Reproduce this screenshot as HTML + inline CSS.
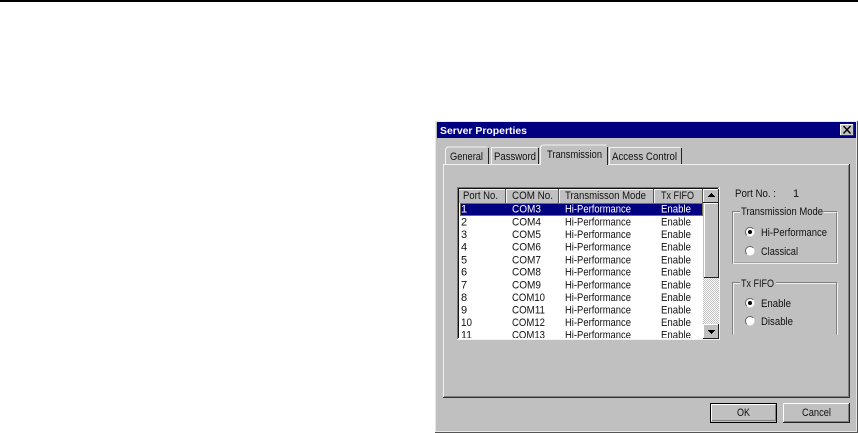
<!DOCTYPE html>
<html><head><meta charset="utf-8"><title>Server Properties</title>
<style>
html,body{margin:0;padding:0;background:#fff;width:858px;height:433px;overflow:hidden}
svg{display:block}
text{font-family:"Liberation Sans",Arial,sans-serif;font-size:11px;fill:#111}
.b{font-weight:bold;fill:#fff;font-size:10.5px}
</style></head><body>
<svg width="858" height="433" viewBox="0 0 858 433" xmlns="http://www.w3.org/2000/svg">
<defs>
<pattern id="d" width="2" height="2" patternUnits="userSpaceOnUse"><rect width="2" height="2" fill="#fff"/><rect width="1" height="1" fill="#c0c0c0"/><rect x="1" y="1" width="1" height="1" fill="#c0c0c0"/></pattern>
<clipPath id="c"><rect x="459" y="188" width="245" height="150"/></clipPath>
</defs>
<rect x="0" y="0" width="858" height="2" fill="#000"/>
<g shape-rendering="crispEdges">
<!-- window -->
<rect x="435" y="121" width="423" height="312" fill="#555"/>
<rect x="435" y="121" width="422" height="311" fill="#e8e8e8"/>
<rect x="436" y="122" width="420" height="309" fill="#c0c0c0"/>
<rect x="437" y="122" width="419" height="16" fill="#000080"/>
<!-- close -->
<rect x="840" y="124" width="14" height="12" fill="#c0c0c0"/>
<path d="M840 124.500h14M840.500 124v12" stroke="#fff" fill="none"/>
<path d="M840 135.500h14M853.500 124v12" stroke="#333" fill="none"/>
<!-- page -->
<rect x="443" y="164" width="406" height="233" fill="#c0c0c0"/>
<rect x="443" y="164" width="406" height="1" fill="#f2f2f2"/>
<rect x="443" y="164" width="1" height="233" fill="#f2f2f2"/>
<rect x="849" y="164" width="1" height="234" fill="#333"/>
<rect x="848" y="165" width="1" height="232" fill="#808080"/>
<rect x="443" y="397" width="407" height="1" fill="#333"/>
<rect x="444" y="396" width="405" height="1" fill="#808080"/>
<!-- tabs -->
<path d="M445.500 164v-15l2-2h40" fill="none" stroke="#f2f2f2"/>
<path d="M488.500 148v16" stroke="#222" fill="none"/>
<path d="M491.500 164v-16.500h46" fill="none" stroke="#f2f2f2"/>
<path d="M538.500 148v16" stroke="#222" fill="none"/>
<rect x="540" y="146" width="68" height="19" fill="#c0c0c0"/>
<path d="M540.500 165v-18l2-2h64" fill="none" stroke="#f2f2f2"/>
<path d="M607.500 147v18" stroke="#222" fill="none"/>
<path d="M609.500 164v-16.500h71" fill="none" stroke="#f2f2f2"/>
<path d="M681.500 148v16" stroke="#222" fill="none"/>
<!-- list -->
<rect x="457" y="187" width="263" height="153" fill="#fff"/>
<path d="M457.500 339V187.500H719" fill="none" stroke="#777"/>
<path d="M458.500 338V188.500H718" fill="none" stroke="#111"/>
<path d="M457 339.500h263M719.500 187v153" fill="none" stroke="#f2f2f2"/>
<!-- header -->
<rect x="459" y="189" width="244" height="14" fill="#c0c0c0"/>
<path d="M459 189.500h244M506.500 189v14M559.500 189v14M654.500 189v14" stroke="#f4f4f4" fill="none"/>
<path d="M505.500 189v14M558.500 189v14M653.500 189v14M702.500 189v14" stroke="#555" fill="none"/>
<!-- selected -->
<rect x="460" y="203" width="243" height="13" fill="#000080"/>
<rect x="460.500" y="203.500" width="242" height="12" fill="none" stroke="#e8e020" stroke-dasharray="1 1"/>
<!-- scrollbar -->
<rect x="703" y="189" width="16" height="150" fill="url(#d)"/>
<rect x="703" y="189" width="16" height="14" fill="#c0c0c0"/>
<path d="M703.500 202V189.500H718" stroke="#fff" fill="none"/>
<path d="M703 202.500h16M718.500 189v14" stroke="#222" fill="none"/>
<path d="M711 193.500h1M710 194.500h3M709 195.500h5M708 196.500h7" stroke="#000" fill="none"/>
<rect x="703" y="203" width="16" height="75" fill="#c0c0c0"/>
<path d="M704.500 277V203.500H718" stroke="#fff" fill="none"/>
<path d="M704 277.500h15M718.500 203v75" stroke="#222" fill="none"/>
<rect x="703" y="324" width="16" height="15" fill="#c0c0c0"/>
<path d="M703.500 338V324.500H718" stroke="#fff" fill="none"/>
<path d="M703 338.500h16M718.500 324v15" stroke="#222" fill="none"/>
<path d="M708 330.500h7M709 331.500h5M710 332.500h3M711 333.500h1" stroke="#000" fill="none"/>
<!-- groups -->
<path d="M740 211.500h-7.500v51.500h104v-51.500h-13" fill="none" stroke="#808080"/>
<path d="M740 212.500h-6.500v50.500M733 263.500h104.500M837.500 212v52M824 212.500h12.500" fill="none" stroke="#f0f0f0"/>
<path d="M740 282.500h-7.500v52" fill="none" stroke="#808080"/>
<path d="M776 282.500h60.500v52" fill="none" stroke="#808080"/>
<path d="M740 283.500h-6.500v51M776 283.500h60M837.500 283v52" fill="none" stroke="#f0f0f0"/>
<!-- OK -->
<rect x="710" y="403" width="67" height="20" fill="#000"/>
<rect x="711" y="404" width="65" height="18" fill="#c0c0c0"/>
<path d="M711.500 421V404.500H775" stroke="#fff" fill="none"/>
<path d="M712 420.500h63.500V405" stroke="#808080" fill="none"/>
<!-- Cancel -->
<rect x="783" y="403" width="67" height="20" fill="#222"/>
<rect x="783" y="403" width="66" height="19" fill="#c0c0c0"/>
<path d="M783.500 422V403.500H849" stroke="#fff" fill="none"/>
<path d="M784 421.500h64.500V404" stroke="#808080" fill="none"/>
</g>
<path d="M843.500 126l7 7.500M850.500 126l-7 7.500" stroke="#000" stroke-width="1.400" fill="none"/>
<!-- radios -->
<g>
<circle cx="750" cy="232" r="4.500" fill="#fff"/><path d="M746.800 235.200A4.500 4.500 0 0 1 753.200 228.800" stroke="#666" fill="none"/><circle cx="750" cy="232" r="2" fill="#000"/>
<circle cx="750" cy="251" r="4.500" fill="#fff"/><path d="M746.800 254.200A4.500 4.500 0 0 1 753.200 247.800" stroke="#666" fill="none"/>
<circle cx="750" cy="303" r="4.500" fill="#fff"/><path d="M746.800 306.200A4.500 4.500 0 0 1 753.200 299.800" stroke="#666" fill="none"/><circle cx="750" cy="303" r="2" fill="#000"/>
<circle cx="750" cy="321" r="4.500" fill="#fff"/><path d="M746.800 324.200A4.500 4.500 0 0 1 753.200 317.800" stroke="#666" fill="none"/>
</g>
<!-- text -->
<text class="b" x="440" y="134" textLength="87" lengthAdjust="spacingAndGlyphs">Server Properties</text>
<text x="450" y="160" textLength="33" lengthAdjust="spacingAndGlyphs">General</text>
<text x="494" y="160" textLength="42" lengthAdjust="spacingAndGlyphs">Password</text>
<text x="547" y="158" textLength="55" lengthAdjust="spacingAndGlyphs">Transmission</text>
<text x="612" y="160" textLength="65" lengthAdjust="spacingAndGlyphs">Access Control</text>
<text x="463" y="199" textLength="35" lengthAdjust="spacingAndGlyphs">Port No.</text>
<text x="512" y="199" textLength="41" lengthAdjust="spacingAndGlyphs">COM No.</text>
<text x="565" y="199" textLength="81" lengthAdjust="spacingAndGlyphs">Transmisson Mode</text>
<text x="661" y="199" textLength="33" lengthAdjust="spacingAndGlyphs">Tx FIFO</text>
<g clip-path="url(#c)">
<g transform="translate(-1,-0.5)">
<text style="fill:#fff" x="462" y="213">1</text><text style="fill:#fff" x="513" y="213" textLength="29" lengthAdjust="spacingAndGlyphs">COM3</text><text style="fill:#fff" x="566" y="213" textLength="66" lengthAdjust="spacingAndGlyphs">Hi-Performance</text><text style="fill:#fff" x="662" y="213" textLength="30" lengthAdjust="spacingAndGlyphs">Enable</text>
<text x="462" y="226">2</text><text x="513" y="226" textLength="29" lengthAdjust="spacingAndGlyphs">COM4</text><text x="566" y="226" textLength="66" lengthAdjust="spacingAndGlyphs">Hi-Performance</text><text x="662" y="226" textLength="30" lengthAdjust="spacingAndGlyphs">Enable</text>
<text x="462" y="238.500">3</text><text x="513" y="238.500" textLength="29" lengthAdjust="spacingAndGlyphs">COM5</text><text x="566" y="238.500" textLength="66" lengthAdjust="spacingAndGlyphs">Hi-Performance</text><text x="662" y="238.500" textLength="30" lengthAdjust="spacingAndGlyphs">Enable</text>
<text x="462" y="251">4</text><text x="513" y="251" textLength="29" lengthAdjust="spacingAndGlyphs">COM6</text><text x="566" y="251" textLength="66" lengthAdjust="spacingAndGlyphs">Hi-Performance</text><text x="662" y="251" textLength="30" lengthAdjust="spacingAndGlyphs">Enable</text>
<text x="462" y="264">5</text><text x="513" y="264" textLength="29" lengthAdjust="spacingAndGlyphs">COM7</text><text x="566" y="264" textLength="66" lengthAdjust="spacingAndGlyphs">Hi-Performance</text><text x="662" y="264" textLength="30" lengthAdjust="spacingAndGlyphs">Enable</text>
<text x="462" y="276">6</text><text x="513" y="276" textLength="29" lengthAdjust="spacingAndGlyphs">COM8</text><text x="566" y="276" textLength="66" lengthAdjust="spacingAndGlyphs">Hi-Performance</text><text x="662" y="276" textLength="30" lengthAdjust="spacingAndGlyphs">Enable</text>
<text x="462" y="289">7</text><text x="513" y="289" textLength="29" lengthAdjust="spacingAndGlyphs">COM9</text><text x="566" y="289" textLength="66" lengthAdjust="spacingAndGlyphs">Hi-Performance</text><text x="662" y="289" textLength="30" lengthAdjust="spacingAndGlyphs">Enable</text>
<text x="462" y="301.500">8</text><text x="513" y="301.500" textLength="33" lengthAdjust="spacingAndGlyphs">COM10</text><text x="566" y="301.500" textLength="66" lengthAdjust="spacingAndGlyphs">Hi-Performance</text><text x="662" y="301.500" textLength="30" lengthAdjust="spacingAndGlyphs">Enable</text>
<text x="462" y="314">9</text><text x="513" y="314" textLength="33" lengthAdjust="spacingAndGlyphs">COM11</text><text x="566" y="314" textLength="66" lengthAdjust="spacingAndGlyphs">Hi-Performance</text><text x="662" y="314" textLength="30" lengthAdjust="spacingAndGlyphs">Enable</text>
<text x="462" y="326.500" textLength="11" lengthAdjust="spacingAndGlyphs">10</text><text x="513" y="326.500" textLength="33" lengthAdjust="spacingAndGlyphs">COM12</text><text x="566" y="326.500" textLength="66" lengthAdjust="spacingAndGlyphs">Hi-Performance</text><text x="662" y="326.500" textLength="30" lengthAdjust="spacingAndGlyphs">Enable</text>
<text x="462" y="339" textLength="11" lengthAdjust="spacingAndGlyphs">11</text><text x="513" y="339" textLength="33" lengthAdjust="spacingAndGlyphs">COM13</text><text x="566" y="339" textLength="66" lengthAdjust="spacingAndGlyphs">Hi-Performance</text><text x="662" y="339" textLength="30" lengthAdjust="spacingAndGlyphs">Enable</text>
</g>
</g>
<text x="735" y="197" textLength="41" lengthAdjust="spacingAndGlyphs">Port No. :</text>
<text x="793" y="197">1</text>
<text x="741" y="215" textLength="82" lengthAdjust="spacingAndGlyphs">Transmission Mode</text>
<text x="761" y="236" textLength="66" lengthAdjust="spacingAndGlyphs">Hi-Performance</text>
<text x="761" y="255" textLength="37" lengthAdjust="spacingAndGlyphs">Classical</text>
<text x="741" y="287" textLength="33" lengthAdjust="spacingAndGlyphs">Tx FIFO</text>
<text x="761" y="307" textLength="30" lengthAdjust="spacingAndGlyphs">Enable</text>
<text x="761" y="325" textLength="32" lengthAdjust="spacingAndGlyphs">Disable</text>
<text x="737" y="416" textLength="13" lengthAdjust="spacingAndGlyphs">OK</text>
<text x="802" y="416" textLength="29" lengthAdjust="spacingAndGlyphs">Cancel</text>
</svg>
</body></html>
